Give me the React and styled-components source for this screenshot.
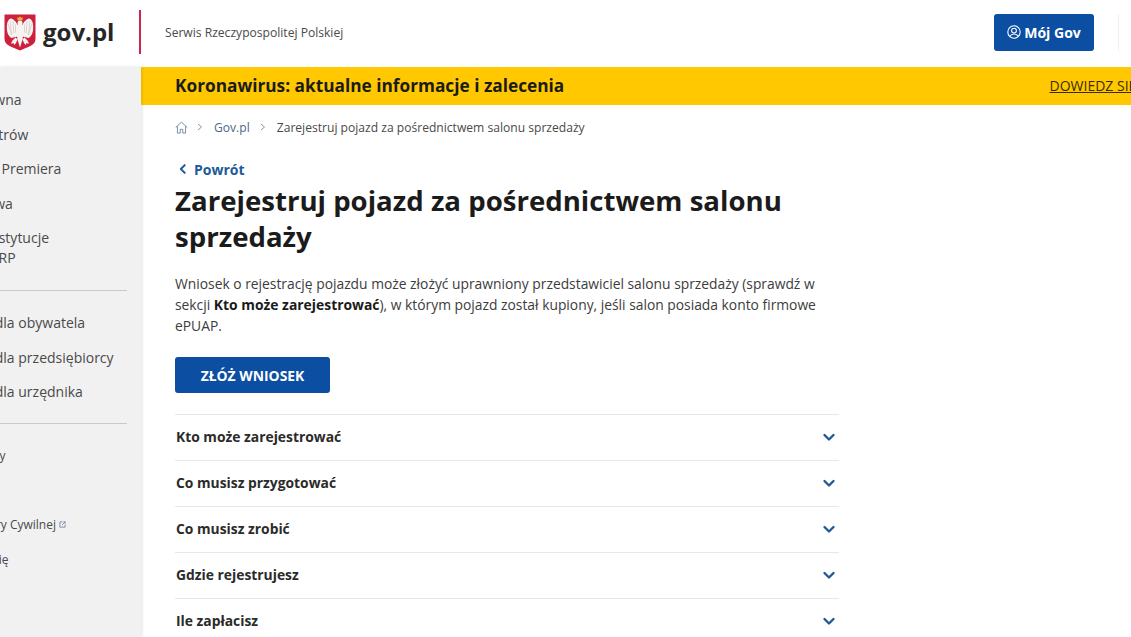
import React from "react";
import styled, { createGlobalStyle } from "styled-components";

const Global = createGlobalStyle`
  html, body { margin: 0; padding: 0; height: 100%; overflow: hidden; background: #fff; }
  body { font-family: "Open Sans", "Liberation Sans", sans-serif; color: #1b1b1b; }
  * { box-sizing: border-box; }
`;

const Page = styled.div`
  width: 1131px;
  height: 637px;
  overflow: hidden;
  display: flex;
  flex-direction: column;
`;

const Header = styled.header`
  height: 67px;
  flex: none;
  display: flex;
  align-items: center;
  background: #fff;
`;

const Brand = styled.div`
  width: 139px;
  flex: none;
  padding-left: 4px;
  display: flex;
  align-items: center;
  gap: 7px;
  height: 100%;
  padding-bottom: 3px;
`;

const Wordmark = styled.span`
  font-size: 24px;
  font-weight: 700;
  line-height: 1;
  color: #262626;
  padding-bottom: 1px;
`;

const Rule = styled.div`
  width: 2px;
  height: 44px;
  margin-top: -3px;
  background: #c8274f;
  flex: none;
`;

const Service = styled.span`
  margin-left: 24px;
  margin-top: -2px;
  font-size: 12.1px;
  color: #4a4a4a;
  flex: 1;
`;

const MyGov = styled.button`
  width: 100px;
  height: 37px;
  margin-top: -3px;
  border: 0;
  border-radius: 3px;
  background: #0b4ea2;
  color: #fff;
  font: 700 14px "Open Sans", sans-serif;
  display: flex;
  align-items: center;
  justify-content: center;
  gap: 3px;
  padding: 0;
`;

const HeaderTail = styled.div`
  width: 37px;
  height: 37px;
  margin-top: -3px;
  flex: none;
  display: flex;
  justify-content: flex-end;
`;

const TailRule = styled.div`
  width: 1px;
  height: 100%;
  margin-right: 12px;
  background: #f0f0f0;
`;

const Body = styled.div`
  flex: 1;
  min-height: 0;
  display: flex;
`;

const Sidebar = styled.aside`
  width: 141px;
  flex: none;
  background: #f1f1f1;
  overflow: hidden;
  padding-top: 22px;
  box-shadow: 1px 0 3px rgba(0, 0, 0, 0.12);
  position: relative;
`;

const NavItem = styled.div`
  font-size: ${(p) => (p.$small ? 12 : 14)}px;
  line-height: ${(p) => (p.$tight ? 20 : 21)}px;
  color: #4a4a4a;
  white-space: nowrap;
  margin-left: ${(p) => p.$shift}px;
  margin-bottom: ${(p) => (p.$tight ? 0 : 13.5)}px;
  display: flex;
  align-items: center;
  gap: 3px;
`;

const Group = styled.div`
  padding-top: ${(p) => p.$top}px;
`;

const Divider = styled.div`
  width: 127px;
  height: 1px;
  background: #c9c9c9;
  margin: ${(p) => p.$m};
`;

const Main = styled.main`
  flex: 1;
  min-width: 0;
  overflow: hidden;
`;

const Banner = styled.div`
  height: 38px;
  background: #ffc800;
  padding: 0 0 2px 34px;
  display: flex;
  align-items: center;
  justify-content: space-between;
  white-space: nowrap;
`;

const BannerTitle = styled.strong`
  font-size: 17.25px;
  font-weight: 700;
  color: #1b1b1b;
`;

const BannerLink = styled.span`
  font-size: 14px;
  color: #3a2c00;
  text-decoration: underline;
  margin-right: -54px;
`;

const Content = styled.div`
  padding: 0 0 0 34px;
  width: 698px;
`;

const Crumbs = styled.nav`
  height: 44px;
  display: flex;
  align-items: center;
  font-size: 12.1px;
  color: #4a4a4a;
`;

const CrumbLink = styled.span`
  color: #4b6a87;
`;

const CrumbSep = styled.span`
  display: flex;
  margin: ${(p) => p.$m};
  color: #8a97a5;
`;

const Back = styled.div`
  margin: 9px 0 2px;
  height: 22px;
  display: flex;
  align-items: center;
  gap: 5px;
  padding-left: 2px;
  font-size: 14px;
  font-weight: 700;
  color: #215a97;
`;

const Title = styled.h1`
  margin: 0;
  font-size: 27.6px;
  line-height: 36px;
  font-weight: 700;
  color: #1b1b1b;
`;

const Lead = styled.p`
  margin: 19px 0 0;
  font-size: 13.83px;
  line-height: 21px;
  color: #3c3c3c;
  strong { font-size: 13.9px; font-weight: 700; color: #1b1b1b; }
`;

const Cta = styled.button`
  display: block;
  margin-top: 21px;
  width: 155px;
  height: 36px;
  border: 0;
  border-radius: 3px;
  background: #0b4ea2;
  color: #fff;
  font: 700 13.9px "Open Sans", sans-serif;
  padding: 0;
`;

const Accordion = styled.div`
  margin-top: 21px;
`;

const Row = styled.div`
  height: 46px;
  border-top: 1px solid #e8e8e8;
  display: flex;
  align-items: center;
  justify-content: space-between;
  padding: 0 3px 2px 1px;
  font-size: 13.85px;
  font-weight: 700;
  color: #2b2b2b;
`;

const Chevron = ({ size = 14, dir = "down", color = "#215a97" }) => (
  <svg width={size} height={size} viewBox="0 0 14 14" fill="none" stroke={color} strokeWidth="2.4" strokeLinecap="round" strokeLinejoin="round">
    <path d={dir === "down" ? "M2.5 5 7 9.5 11.5 5" : "M9 2.5 4.5 7 9 11.5"} />
  </svg>
);

const SmallChevron = () => (
  <svg width="8" height="8" viewBox="0 0 8 8" fill="none" stroke="currentColor" strokeWidth="1">
    <path d="M2 1 5.500 4 2 7" />
  </svg>
);

const HomeIcon = () => (
  <svg width="13" height="13" viewBox="0 0 14 14" fill="none" stroke="#5d7d99" strokeWidth="0.9" strokeLinejoin="round">
    <path d="M.8 7 7 1.200 13.200 7M2.600 5.600V13H5.600V9H8.400V13H11.400V5.600" />
  </svg>
);

const UserIcon = () => (
  <svg width="14" height="14" viewBox="0 0 14 14" fill="none" stroke="#fff" strokeWidth="1.1">
    <circle cx="7" cy="7" r="6.2" />
    <circle cx="7" cy="5.600" r="2.4" />
    <path d="M2.800 11.400C3.800 9.600 5.200 9 7 9s3.200.6 4.200 2.400" />
  </svg>
);

const ExternalIcon = () => (
  <svg width="7" height="7" viewBox="0 0 8 8" fill="none" stroke="#5d7d99" strokeWidth="0.9">
    <path d="M4 1H1v6h6V4M3.500 4.500 7 1M5 1h2v2" />
  </svg>
);

const EagleHalf = () => (
  <g>
    <path fill="#f6f3f1" d="M14.500 13C12.500 8 9.500 4.800 7 4.600 4.500 5 3 8 2.800 12.500c-.2 5 1.200 9.500 4.700 11.500l6-1.500z" />
    <path fill="none" stroke="#c9c2c0" strokeWidth="0.6" d="M6 7l1.500 14M4.200 10l3.500 11M9 7.500l.8 12M11.500 10.500v8" />
    <path fill="#f6f3f1" d="M11.500 23.500 8 27l-.8 3 2.300-1 .7 2 1.800-2 1.500-3.500z" />
  </g>
);

const Emblem = () => (
  <svg width="32" height="37" viewBox="0 0 32 37">
    <path d="M.5.500h31V25c0 6.500-7.500 7.800-15.500 11.500C8 32.800.5 31.500.5 25z" fill="#cd1f3e" />
    <EagleHalf />
    <g transform="matrix(-1 0 0 1 32 0)">
      <EagleHalf />
    </g>
    <ellipse cx="16" cy="17.500" rx="3.800" ry="8.500" fill="#f6f3f1" />
    <path fill="#f6f3f1" d="M13 24 16 33.500 19 24z" />
    <circle cx="16" cy="9" r="2.500" fill="#f6f3f1" />
    <path fill="#e6b436" d="M13.600 6.500 13.200 3l1.500 1 1.300-1.800L17.300 4l1.500-1-.4 3.500z" />
  </svg>
);

const mainNav = [
  { t: "Strona główna", s: -72 },
  { t: "Rada Ministrów", s: -73 },
  { t: "Kancelaria Premiera", s: -70 },
  { t: "Ministerstwa", s: -71 },
];

const rows = [
  "Kto może zarejestrować",
  "Co musisz przygotować",
  "Co musisz zrobić",
  "Gdzie rejestrujesz",
  "Ile zapłacisz",
];

export default function App() {
  return (
    <Page>
      <Global />
      <Header>
        <Brand>
          <Emblem />
          <Wordmark>gov.pl</Wordmark>
        </Brand>
        <Rule />
        <Service>Serwis Rzeczypospolitej Polskiej</Service>
        <MyGov>
          <UserIcon />
          Mój Gov
        </MyGov>
        <HeaderTail>
          <TailRule />
        </HeaderTail>
      </Header>
      <Body>
        <Sidebar>
          {mainNav.map((n) => (
            <NavItem key={n.t} $shift={n.s}>{n.t}</NavItem>
          ))}
          <Group $top={1}>
            <NavItem $tight $shift={-46}>Inne instytucje</NavItem>
            <NavItem $tight $shift={-16}>w RP</NavItem>
          </Group>
          <Divider $m="22px 0 21px 0" />
          <NavItem $shift={-49}>Usługi dla obywatela</NavItem>
          <NavItem $shift={-49}>Usługi dla przedsiębiorcy</NavItem>
          <NavItem $shift={-49}>Usługi dla urzędnika</NavItem>
          <Divider $m="21px 0 21px 0" />
          <NavItem $small $shift={-44}>Kontakty</NavItem>
          <NavItem $small $shift={-48}>&nbsp;</NavItem>
          <NavItem $small $shift={-38}>Rejestry Cywilnej<ExternalIcon /></NavItem>
          <NavItem $small $shift={-43}>Pomoc ię</NavItem>
        </Sidebar>
        <Main>
          <Banner>
            <BannerTitle>Koronawirus: aktualne informacje i zalecenia</BannerTitle>
            <BannerLink>DOWIEDZ SIĘ WIĘCEJ</BannerLink>
          </Banner>
          <Content>
            <Crumbs>
              <HomeIcon />
              <CrumbSep $m="0 10px 0 8px"><SmallChevron /></CrumbSep>
              <CrumbLink>Gov.pl</CrumbLink>
              <CrumbSep $m="0 10px 0 9px"><SmallChevron /></CrumbSep>
              Zarejestruj pojazd za pośrednictwem salonu sprzedaży
            </Crumbs>
            <Back>
              <Chevron size={12} dir="left" />
              Powrót
            </Back>
            <Title>Zarejestruj pojazd za pośrednictwem salonu sprzedaży</Title>
            <Lead>
              Wniosek o rejestrację pojazdu może złożyć uprawniony przedstawiciel salonu sprzedaży (sprawdź w sekcji <strong>Kto może zarejestrować</strong>), w którym pojazd został kupiony, jeśli salon posiada konto firmowe ePUAP.
            </Lead>
            <Cta>ZŁÓŻ WNIOSEK</Cta>
            <Accordion>
              {rows.map((r) => (
                <Row key={r}>
                  {r}
                  <Chevron size={14} />
                </Row>
              ))}
            </Accordion>
          </Content>
        </Main>
      </Body>
    </Page>
  );
}
